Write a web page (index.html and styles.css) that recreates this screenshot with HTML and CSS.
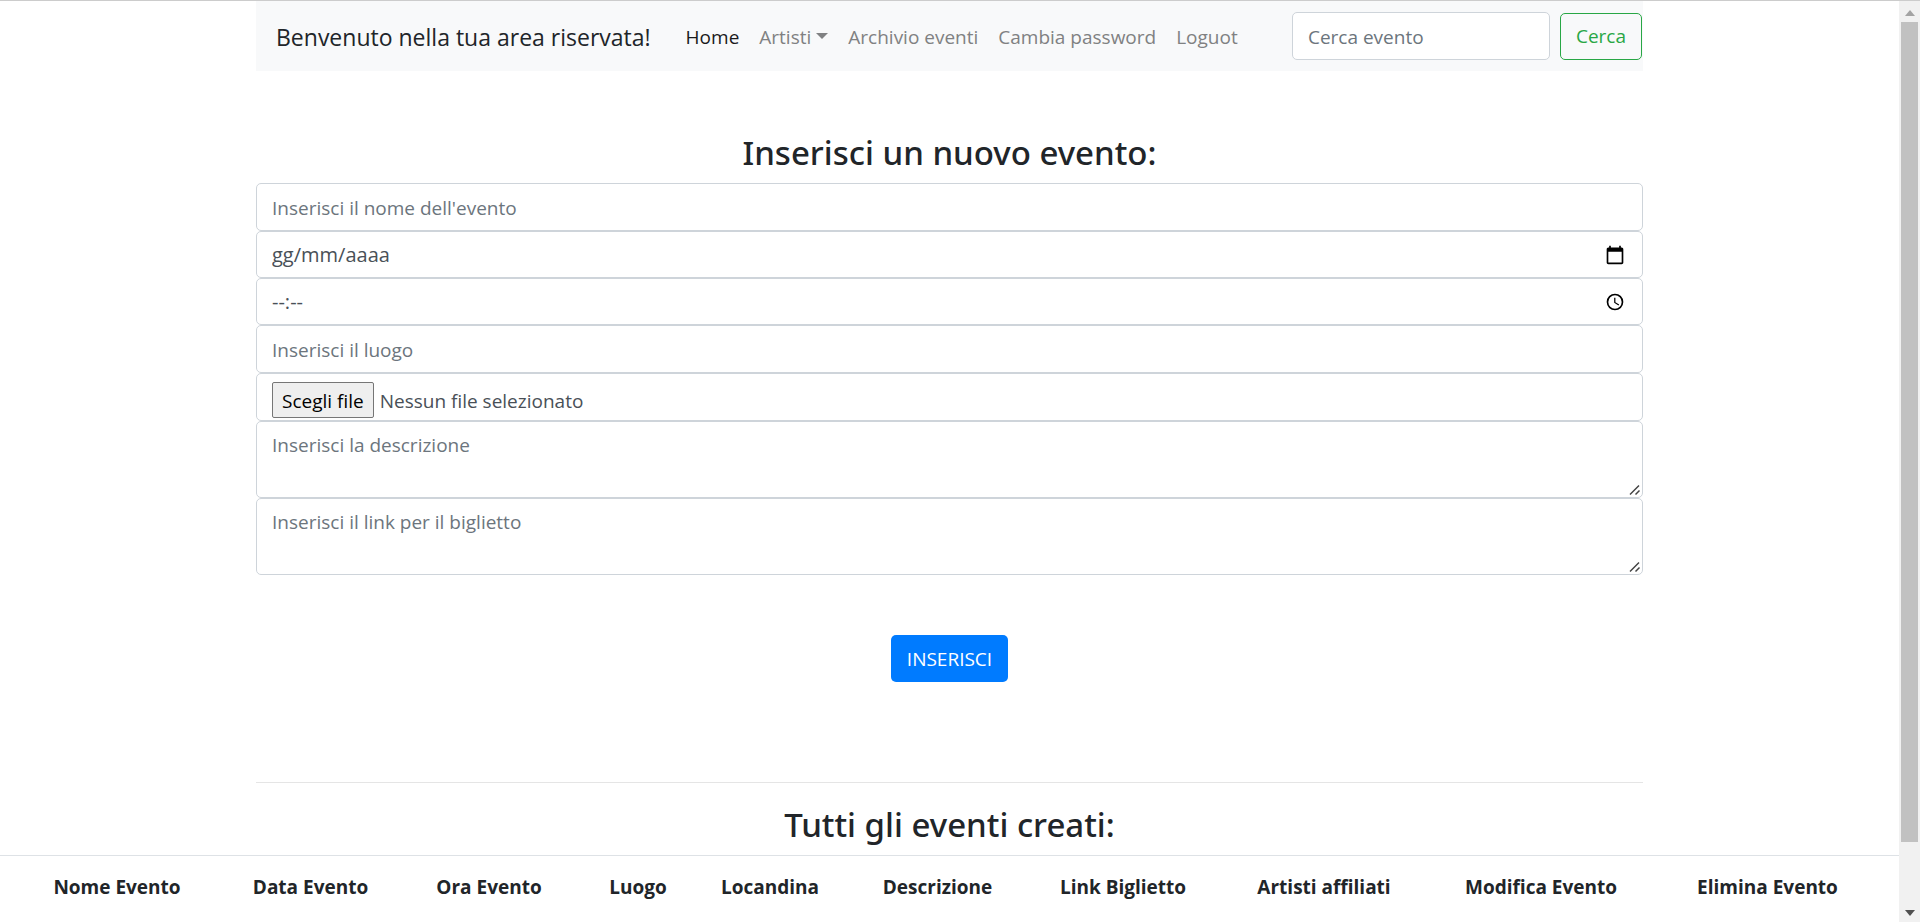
FILE: index.html
```html
<!DOCTYPE html>
<html lang="it">
<head>
<meta charset="utf-8">
<meta name="viewport" content="width=device-width, initial-scale=1">
<title>Area riservata</title>
<link rel="stylesheet" href="styles.css">
</head>
<body>
<div class="window">
  <div class="page">
    <div class="container">
      <nav class="navbar">
        <a class="brand" href="#">Benvenuto nella tua area riservata!</a>
        <div class="nav-links">
          <a class="nav-link active" href="#">Home</a>
          <a class="nav-link dropdown" href="#">Artisti</a>
          <a class="nav-link" href="#">Archivio eventi</a>
          <a class="nav-link" href="#">Cambia password</a>
          <a class="nav-link" href="#">Loguot</a>
        </div>
        <form class="search">
          <input class="control search-input" type="search" placeholder="Cerca evento" aria-label="Cerca evento">
          <button class="btn btn-outline" type="button">Cerca</button>
        </form>
      </nav>

      <main>
        <h2 class="title">Inserisci un nuovo evento:</h2>
        <form class="event-form">
          <input class="control" type="text" placeholder="Inserisci il nome dell'evento" aria-label="Nome dell'evento">
          <div class="control picker">
            <input class="picker-input" type="text" placeholder="gg/mm/aaaa" aria-label="Data dell'evento">
            <button class="picker-button" type="button" aria-label="Apri calendario">
              <svg class="icon" viewBox="0 0 24 24"><path d="M20 3h-1V1h-2v2H7V1H5v2H4c-1.100 0-2 .9-2 2v16c0 1.100.9 2 2 2h16c1.100 0 2-.9 2-2V5c0-1.100-.9-2-2-2zm0 18H4V8h16v13z"/></svg>
            </button>
          </div>
          <div class="control picker">
            <input class="picker-input" type="text" placeholder="--:--" aria-label="Ora dell'evento">
            <button class="picker-button" type="button" aria-label="Scegli ora">
              <svg class="icon" viewBox="0 0 24 24"><path d="M12 2a10 10 0 1 0 0 20 10 10 0 0 0 0-20zm0 18a8 8 0 1 1 0-16 8 8 0 0 1 0 16zm.5-13H11v6l5.200 3.200.8-1.300-4.500-2.700V7z"/></svg>
            </button>
          </div>
          <input class="control" type="text" placeholder="Inserisci il luogo" aria-label="Luogo">
          <div class="control file">
            <input class="file-input" type="file" id="locandina">
            <label class="file-button" for="locandina">Scegli file</label>
            <span>Nessun file selezionato</span>
          </div>
          <textarea class="control area" placeholder="Inserisci la descrizione" aria-label="Descrizione"></textarea>
          <textarea class="control area" placeholder="Inserisci il link per il biglietto" aria-label="Link per il biglietto"></textarea>
          <button class="btn btn-primary" type="button">INSERISCI</button>
        </form>
        <hr class="divider">
        <h2 class="title">Tutti gli eventi creati:</h2>
      </main>
    </div>

    <table class="events">
      <colgroup>
        <col class="c-name"><col class="c-date"><col class="c-time"><col class="c-place"><col class="c-poster">
        <col class="c-text"><col class="c-link"><col class="c-artists"><col class="c-edit"><col class="c-delete">
      </colgroup>
      <thead>
        <tr>
          <th scope="col">Nome Evento</th>
          <th scope="col">Data Evento</th>
          <th scope="col">Ora Evento</th>
          <th scope="col">Luogo</th>
          <th scope="col">Locandina</th>
          <th scope="col">Descrizione</th>
          <th scope="col">Link Biglietto</th>
          <th scope="col">Artisti affiliati</th>
          <th scope="col">Modifica Evento</th>
          <th scope="col">Elimina Evento</th>
        </tr>
      </thead>
    </table>
  </div>

  <div class="scrollbar" aria-hidden="true">
    <svg class="arrow arrow-up" viewBox="0 0 10 6"><path d="M0 6 5 0l5 6z"/></svg>
    <div class="track"><div class="thumb"></div></div>
    <svg class="arrow" viewBox="0 0 10 6"><path d="M0 0h10L5 6z"/></svg>
  </div>
</div>
</body>
</html>
```

FILE: styles.css
```css
* {
  box-sizing: border-box;
}

body {
  margin: 0;
  font: 19px/30px "Open Sans", "Noto Sans", sans-serif;
  color: #212529;
  background: #fff;
}

input,
button,
textarea {
  font: inherit;
}

.window {
  display: flex;
  height: 100vh;
  border-top: 1px solid #ccc;
}

.page {
  flex: 1;
  min-width: 0;
  overflow: hidden;
}

.container {
  max-width: 1425px;
  margin: 0 auto;
  padding: 0 19px;
}

/* Navigation bar */

.navbar {
  display: flex;
  align-items: center;
  height: 70px;
  padding-left: 20px;
  background: #f8f9fa;
}

.navbar a {
  padding-top: 2px;
  text-decoration: none;
  white-space: nowrap;
}

.brand {
  margin-right: 35px;
  font-size: 23px;
  color: #212529;
}

.nav-links {
  display: flex;
  gap: 20px;
}

.nav-link {
  color: #808182;
}

.nav-link.active {
  color: #1a1a1a;
}

.dropdown::after {
  content: "";
  display: inline-block;
  margin-left: 5px;
  vertical-align: 5px;
  border: 6px solid transparent;
  border-top-color: currentColor;
  border-bottom: 0;
}

.search {
  display: flex;
  align-items: center;
  gap: 10px;
  margin-left: auto;
  padding-right: 1px;
}

.control.search-input {
  width: 258px;
}

/* Form controls */

.control {
  display: block;
  width: 100%;
  height: 48px;
  margin: 0;
  padding: 2px 15px 0;
  border: 1px solid #ced4da;
  border-radius: 5px;
  background: #fff;
  color: #495057;
}

.control::placeholder {
  color: #6c757d;
  opacity: 1;
}

.control.picker {
  display: flex;
  align-items: center;
  height: 47px;
  padding: 0 17px 0 15px;
}

.picker-input {
  flex: 1;
  min-width: 0;
  padding: 0;
  border: 0;
  background: none;
  font-size: 20px;
  color: #495057;
}

.picker-input::placeholder {
  color: #495057;
  opacity: 1;
}

.picker-button {
  display: flex;
  padding: 0;
  border: 0;
  background: none;
}

.icon {
  width: 20px;
  height: 20px;
}

.control.file {
  display: flex;
  align-items: flex-start;
  gap: 6px;
  padding-top: 8px;
  line-height: 38px;
}

.file-input {
  position: absolute;
  width: 1px;
  height: 1px;
  opacity: 0;
}

.file-button {
  height: 36px;
  padding: 0 9px;
  border: 1px solid #767676;
  border-radius: 2px;
  background: #efefef;
  color: #000;
  line-height: 36px;
}

.control.area {
  height: 77px;
  padding-top: 8px;
  resize: vertical;
}

.area::-webkit-resizer {
  background: url("data:image/svg+xml,%3Csvg xmlns='http://www.w3.org/2000/svg' width='15' height='15'%3E%3Cpath d='M3 12.500 12 3.500M8.500 12.500l4-4' stroke='%23444' stroke-width='1.500'/%3E%3C/svg%3E") right bottom no-repeat;
}

.btn {
  height: 47px;
  padding: 0 15px;
  border: 1px solid transparent;
  border-radius: 5px;
}

.btn-outline {
  border-color: #28a745;
  background: none;
  color: #28a745;
}

.btn-primary {
  margin: 60px auto 0;
  background: #007bff;
  color: #fff;
}

.event-form {
  display: flex;
  flex-direction: column;
}

/* Sections */

.title {
  margin: 0 0 6px;
  font-family: "Noto Sans", "Open Sans", sans-serif;
  font-size: 33px;
  font-weight: 500;
  line-height: 48px;
  text-align: center;
}

.navbar + main {
  padding-top: 58px;
}

.divider {
  height: 1px;
  margin: 100px 0 18px;
  border: 0;
  background: #e5e5e5;
}

/* Events table */

.events {
  width: 100%;
  border-collapse: collapse;
  border-top: 1px solid #dee2e6;
  table-layout: fixed;
}

.events th {
  height: 62px;
  padding: 0;
  font-size: 19px;
  font-weight: 700;
  text-align: center;
  white-space: nowrap;
}

.events th:first-child {
  padding-left: 24px;
}

.c-name { width: 210px; }
.c-date { width: 201px; }
.c-time { width: 156px; }
.c-place { width: 142px; }
.c-poster { width: 122px; }
.c-text { width: 213px; }
.c-link { width: 158px; }
.c-artists { width: 244px; }
.c-edit { width: 190px; }
.c-delete { width: 263px; }

/* Scrollbar */

.scrollbar {
  display: flex;
  flex-direction: column;
  align-items: center;
  gap: 6px;
  width: 21px;
  padding: 9px 2px 6px;
  background: #f1f1f1;
}

.arrow {
  flex: none;
  width: 10px;
  height: 6px;
  fill: #505050;
}

.arrow-up {
  fill: #a3a3a3;
}

.track {
  flex: 1;
  width: 17px;
}

.thumb {
  height: 93%;
  background: #c1c1c1;
}
```
